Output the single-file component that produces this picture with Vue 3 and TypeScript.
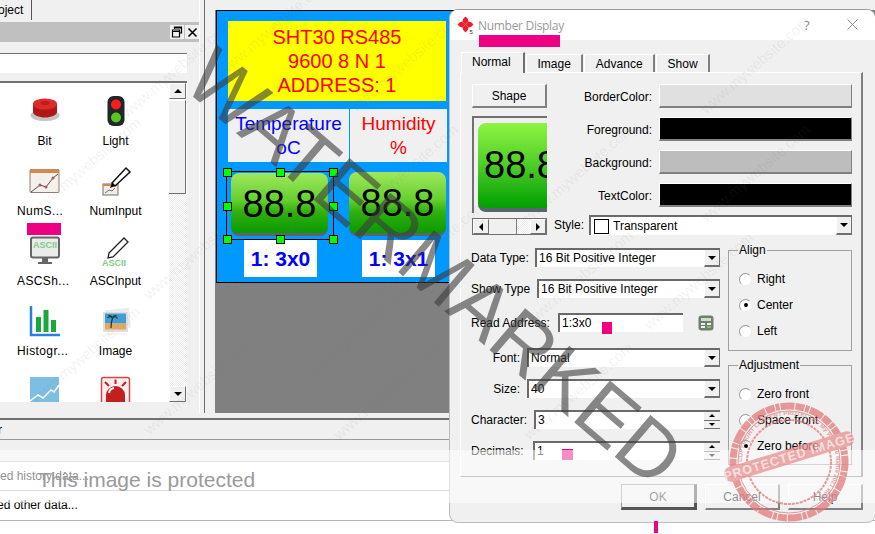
<script setup lang="ts">
import { ref } from 'vue';

const tools = ref([
    { name: 'Bit', icon: 'bit', elided: false },
    { name: 'Light', icon: 'light', elided: false },
    { name: 'NumS...', icon: 'numshow', elided: true },
    { name: 'NumInput', icon: 'numinput', elided: false },
    { name: 'ASCSh...', icon: 'ascshow', elided: true },
    { name: 'ASCInput', icon: 'ascinput', elided: false },
    { name: 'Histogr...', icon: 'histogram', elided: true },
    { name: 'Image', icon: 'image', elided: false },
    { name: 'Curve', icon: 'curve', elided: false },
    { name: 'Alarm', icon: 'alarm', elided: false },
]);

const tabs = ref(['Normal', 'Image', 'Advance', 'Show']);

const colors = ref([
    { label: 'BorderColor:', value: '#e0e0e0' },
    { label: 'Foreground:', value: '#000000' },
    { label: 'Background:', value: '#bdbdbd' },
    { label: 'TextColor:', value: '#000000' },
]);

const fields = ref([
    { label: 'Data Type:', value: '16 Bit Positive Integer', kind: 'combo', width: 64, right: false, top: 0 },
    { label: 'Show Type', value: '16 Bit Positive Integer', kind: 'combo', width: 66, right: false, top: 12 },
    { label: 'Read Address:', value: '1:3x0', kind: 'input', width: 87, right: false, top: 15 },
    { label: 'Font:', value: 'Normal', kind: 'combo', width: 56, right: true, top: 16 },
    { label: 'Size:', value: '40', kind: 'combo', width: 56, right: true, top: 12 },
    { label: 'Character:', value: '3', kind: 'spin', width: 63, right: false, top: 12 },
    { label: 'Decimals:', value: '1', kind: 'spin', width: 62, right: false, top: 12 },
]);

const alignOptions = ref(['Right', 'Center', 'Left']);
const adjustOptions = ref(['Zero front', 'Space front', 'Zero before']);

const handles = ref([
    [0, 0], [50, 0], [100, 0],
    [0, 50], [100, 50],
    [0, 100], [50, 100], [100, 100],
]);

const stamps = ref([
    [28, 205], [27, 394], [118, 108], [140, 290], [215, 66], [215, 284],
    [347, 102], [345, 212], [372, 288], [300, 370], [520, 212], [697, 104],
    [697, 212], [520, 318], [640, 320], [140, 425], [330, 430], [520, 430],
]);

const petals = ref([0, 90, 180, 270]);
</script>

<template>
  <div class="app">
    <div class="workspace">
      <aside class="toolbox">
        <div class="tab-strip">
          <div class="dock-tab">oject</div>
        </div>
        <div class="dock-title">
          <span class="dock-btn">
            <svg width="12" height="12" viewBox="0 0 12 12"><path d="M3.5 3V1h7v6H8.5M1.5 4h7v7h-7zM1.5 5.5h7M3.5 2h7" fill="none" stroke="#000" stroke-width="1.2"/></svg>
          </span>
          <span class="dock-btn">
            <svg width="11" height="11" viewBox="0 0 11 11"><path d="M1.5 1.5l8 8M9.5 1.5l-8 8" stroke="#000" stroke-width="1.6"/></svg>
          </span>
        </div>
        <div class="search"></div>
        <div class="tool-list">
          <div class="tool-grid">
            <div v-for="tool in tools" :key="tool.name" class="tool">
              <svg class="tool-icon" width="32" height="32" viewBox="0 0 32 32">
                <template v-if="tool.icon === 'bit'">
                  <ellipse cx="16" cy="19.500" rx="14.500" ry="5.500" fill="#c4c4c4"/>
                  <path d="M4 8v8c0 3 6 5.500 12 5.500S28 19 28 16V8z" fill="#b01818"/>
                  <ellipse cx="16" cy="8" rx="12" ry="5.500" fill="#e02a2a"/>
                  <ellipse cx="16" cy="7" rx="4.500" ry="2" fill="#bd1c1c"/>
                </template>
                <template v-else-if="tool.icon === 'light'">
                  <rect x="7.500" y="0" width="17" height="30" rx="6" fill="#20262b"/>
                  <circle cx="16" cy="8.500" r="5" fill="#ff1a1a"/>
                  <circle cx="16" cy="21.500" r="5" fill="#55c81e"/>
                </template>
                <template v-else-if="tool.icon === 'numshow'">
                  <rect x="1" y="3.500" width="29" height="23" rx="1" fill="#f4f1ec" stroke="#8c7f78"/>
                  <rect x="1" y="3" width="29" height="4" fill="#cb8c4e"/>
                  <path d="M2 26l9-7 6 2 7-9 5-4" fill="none" stroke="#5c4a4a"/>
                  <circle cx="11" cy="19" r="1.500" fill="#a85a50"/>
                  <circle cx="17" cy="21" r="1.500" fill="#a85a50"/>
                  <circle cx="24" cy="12" r="1.500" fill="#a85a50"/>
                </template>
                <template v-else-if="tool.icon === 'numinput'">
                  <rect x="3" y="18" width="15" height="11" fill="#f0ede8" stroke="#7a6f68"/>
                  <rect x="3" y="18" width="15" height="2" fill="#cb8c4e"/>
                  <path d="M5 27l4-3 3 1 3-3" fill="none" stroke="#5c4a4a" stroke-width=".8"/>
                  <path d="M12 17l14-15 4 4-15 14z" fill="#fff" stroke="#111" stroke-width="1.500"/>
                  <path d="M10 22l2-5 3 3z" fill="#000"/>
                </template>
                <template v-else-if="tool.icon === 'ascshow'">
                  <rect x="2" y="1.500" width="28" height="20" rx="2" fill="#e9ece8" stroke="#666" stroke-width="2"/>
                  <text x="16" y="12" text-anchor="middle" class="icon-text">ASCII</text>
                  <path d="M14 22h4v4h-4zM9 27h14" stroke="#666" stroke-width="2" fill="#666"/>
                </template>
                <template v-else-if="tool.icon === 'ascinput'">
                  <path d="M9 17L24 2l4 4-15 15-5 1z" fill="#fff" stroke="#222" stroke-width="1.300"/>
                  <text x="14" y="30" text-anchor="middle" class="icon-text">ASCII</text>
                </template>
                <template v-else-if="tool.icon === 'histogram'">
                  <path d="M2 0v29h29" fill="none" stroke="#2a7ee0" stroke-width="2.500"/>
                  <rect x="7" y="11" width="5" height="15" fill="#1aa83c"/>
                  <rect x="14.500" y="4" width="5" height="22" fill="#1aa83c"/>
                  <rect x="22" y="14" width="5" height="12" fill="#1aa83c"/>
                </template>
                <template v-else-if="tool.icon === 'image'">
                  <rect x="6" y="3" width="24" height="20" fill="#ececec" transform="rotate(-6 18 13)"/>
                  <rect x="3" y="6" width="25" height="20" fill="#dedede"/>
                  <rect x="5" y="7.500" width="21" height="10" fill="#3f9ed8"/>
                  <rect x="5" y="17.500" width="21" height="6" fill="#e5a760"/>
                  <path d="M11 22c0-4 .5-7 1.500-10" fill="none" stroke="#3a2d1c" stroke-width="1.200"/>
                  <path d="M12.500 12c-2-2-4-1.500-5 0M12.500 12c2-2 4-1.500 5 .5M12.500 12c-1-2-3-3-4-2.500M12.500 12c1-2 3-3 4-2" fill="none" stroke="#1f3d22" stroke-width="1.200"/>
                  <rect x="5" y="27" width="22" height="2" fill="#f4f4f4"/>
                </template>
                <template v-else-if="tool.icon === 'curve'">
                  <rect x="1" y="1" width="29" height="31" fill="#7cbfe2"/>
                  <path d="M1 25l8-6 5 3 8-8 3 2 5-7" fill="none" stroke="#fff" stroke-width="1.500"/>
                </template>
                <template v-else>
                  <rect x="1.500" y="1.500" width="28" height="30" rx="2" fill="#fbeeee" stroke="#d64848" stroke-width="1.500"/>
                  <path d="M6 32V19a9.500 9 0 0 1 19 0v13z" fill="#c41f1f"/>
                  <path d="M9 17a6 6 0 0 1 5-5" fill="none" stroke="#fff" stroke-width="2"/>
                  <path d="M15.500 3.500v4.500M5 6l4 4M26 6l-4 4" stroke="#c41f1f" stroke-width="2"/>
                </template>
              </svg>
              <span class="tool-name" :class="{ elided: tool.elided }">{{ tool.name }}</span>
            </div>
          </div>
          <div class="v-scroll">
            <div class="scroll-btn"><i class="arrow-up"></i></div>
            <div class="scroll-thumb"></div>
            <div class="scroll-track"></div>
            <div class="scroll-btn"><i class="arrow-down"></i></div>
          </div>
        </div>
      </aside>

      <main class="canvas-area">
        <div class="canvas">
          <div class="screen">
            <div class="banner">
              <div>SHT30 RS485</div>
              <div>9600 8 N 1</div>
              <div>ADDRESS: 1</div>
            </div>
            <div class="headers">
              <div class="header-cell temperature">Temperature<br>oC</div>
              <div class="header-cell humidity">Humidity<br>%</div>
            </div>
            <div class="gauges">
              <div class="gauge first">
                <div class="gauge-face">88.8</div>
                <div class="gauge-label">1: 3x0</div>
                <div class="selection">
                  <i
                    v-for="(h, i) in handles"
                    :key="i"
                    class="handle"
                    :style="{ left: h[0] + '%', top: h[1] + '%' }"
                  ></i>
                </div>
              </div>
              <div class="gauge second">
                <div class="gauge-face">88.8</div>
                <div class="gauge-label">1: 3x1</div>
              </div>
            </div>
          </div>
        </div>
      </main>
    </div>

    <section class="log">
      <div class="log-head">r</div>
      <div class="log-spacer"></div>
      <div class="log-row">ed history data...</div>
      <div class="log-row last">ed other data...</div>
    </section>

    <section class="dialog">
      <header class="dialog-title">
        <svg class="dialog-logo" width="18" height="18" viewBox="0 0 18 18">
          <g v-for="a in petals" :key="a" :transform="`rotate(${a} 8.500 8.500)`">
            <path d="M8.500 8.500L5.500 5.500Q5.500 2.500 8.500 .5Q11.500 2.500 11.500 5.500z" fill="#e8202a"/>
          </g>
          <text x="12.500" y="17.500" class="logo-five">5</text>
        </svg>
        <span class="dialog-name">Number Display</span>
        <span class="dialog-help">?</span>
        <svg class="dialog-close" width="11" height="11" viewBox="0 0 11 11"><path d="M.5.5l10 10M10.500.5l-10 10" stroke="#8a8a8a" stroke-width="1"/></svg>
      </header>

      <div class="tabs">
        <div v-for="(tab, i) in tabs" :key="tab" class="tab" :class="{ active: i === 0 }">{{ tab }}</div>
      </div>

      <div class="pane">
        <div class="pane-top">
          <div class="preview-col">
            <div class="btn shape-btn">Shape</div>
            <div class="preview">
              <div class="preview-face">88.8</div>
            </div>
            <div class="h-scroll">
              <div class="scroll-btn small"><i class="arrow-left"></i></div>
              <div class="h-thumb"></div>
              <div class="h-track"></div>
              <div class="scroll-btn small"><i class="arrow-right"></i></div>
            </div>
          </div>
          <div class="color-col">
            <div v-for="c in colors" :key="c.label" class="color-row">
              <label class="color-label">{{ c.label }}</label>
              <div class="color-btn" :style="{ background: c.value }"></div>
            </div>
            <div class="style-row">
              <label class="style-label">Style:</label>
              <div class="combo grow">
                <span class="swatch"></span>
                <span class="combo-text">Transparent</span>
                <div class="combo-btn"><i class="arrow-down"></i></div>
              </div>
            </div>
          </div>
        </div>

        <div class="pane-bottom">
          <div class="form-col">
            <div
              v-for="f in fields"
              :key="f.label"
              class="field"
              :style="{ marginTop: f.top + 'px' }"
            >
              <label
                class="field-label"
                :class="{ right: f.right }"
                :style="{ width: f.width + 'px' }"
              >{{ f.label }}</label>
              <template v-if="f.kind === 'input'">
                <div class="combo address"><span class="combo-text">{{ f.value }}</span></div>
                <svg class="calc" width="16" height="16" viewBox="0 0 16 16">
                  <rect x=".5" y=".5" width="15" height="15" rx="3" fill="#6f7f70"/>
                  <rect x="3" y="3" width="10" height="3" fill="#cfe0c8"/>
                  <rect x="3" y="8" width="4" height="2" fill="#eee"/>
                  <rect x="9" y="8" width="4" height="2" fill="#eee"/>
                  <rect x="3" y="11" width="4" height="2" fill="#eee"/>
                  <rect x="9" y="11" width="4" height="2" fill="#7ac943"/>
                </svg>
              </template>
              <div v-else class="combo grow">
                <span class="combo-text">{{ f.value }}</span>
                <div v-if="f.kind === 'combo'" class="combo-btn"><i class="arrow-down"></i></div>
                <div v-else class="spin">
                  <div class="spin-btn"><i class="arrow-up tiny"></i></div>
                  <div class="spin-btn"><i class="arrow-down tiny"></i></div>
                </div>
              </div>
            </div>
          </div>
          <div class="group-col">
            <div class="group">
              <span class="group-title">Align</span>
              <div v-for="(o, i) in alignOptions" :key="o" class="radio-row">
                <i class="radio" :class="{ checked: i === 1 }"></i>
                <span>{{ o }}</span>
              </div>
            </div>
            <div class="group second-group">
              <span class="group-title">Adjustment</span>
              <div v-for="(o, i) in adjustOptions" :key="o" class="radio-row">
                <i class="radio" :class="{ checked: i === 2 }"></i>
                <span>{{ o }}</span>
              </div>
            </div>
          </div>
        </div>
      </div>

      <footer class="dialog-foot">
        <div class="btn foot-btn default">OK</div>
        <div class="btn foot-btn">Cancel</div>
        <div class="btn foot-btn">Help</div>
      </footer>
    </section>

    <!-- redaction marks -->
    <i class="mark mark-title"></i>
    <i class="mark mark-tool"></i>
    <i class="mark mark-address"></i>
    <i class="mark mark-decimals"></i>
    <i class="mark mark-foot"></i>

    <!-- watermark layers -->
    <div class="veil"></div>
    <span
      v-for="(s, i) in stamps"
      :key="i"
      class="tile"
      :style="{ left: s[0] + 'px', top: s[1] + 'px' }"
    >www.mywebsite.com</span>
    <div class="big-mark">WATERMARKED</div>
    <div class="protected">This image is protected</div>
    <svg class="seal" width="130" height="130" viewBox="0 0 130 130">
      <defs>
        <path id="seal-ring" d="M65 65m-47 0a47 47 0 1 1 94 0a47 47 0 1 1-94 0"/>
      </defs>
      <circle cx="65" cy="65" r="56" fill="none" stroke="#e27a7a" stroke-width="7" stroke-dasharray="9 1 4 1 14 1"/>
      <circle cx="65" cy="65" r="51" fill="none" stroke="#e27a7a" stroke-width="1"/>
      <circle cx="65" cy="65" r="42" fill="none" stroke="#e27a7a" stroke-width="2" stroke-dasharray="3 1"/>
      <text class="seal-ring-text"><textPath href="#seal-ring">COPYRIGHT CONTENT PROTECTED  My Website Name 2021 Best</textPath></text>
      <g transform="rotate(-17 65 59)">
        <rect x="-2" y="52" width="134" height="15" rx="6" fill="#e98f8f"/>
        <text x="65" y="64" text-anchor="middle" class="seal-text">PROTECTED IMAGE</text>
      </g>
    </svg>
  </div>
</template>

<style>
html, body {
  margin: 0;
  background: #fff;
}
</style>

<style scoped>
.app {
  position: relative;
  width: 875px;
  height: 534px;
  overflow: hidden;
  background: #fff;
  font-family: "Liberation Sans", Arial, sans-serif;
  font-size: 12px;
  color: #000;
}

.workspace {
  display: flex;
  height: 418px;
  background: #f0f0f0;
}

.toolbox {
  width: 204px;
  height: 413px;
  border-right: 1px solid #707070;
  box-shadow: inset -4px 0 0 #f0f0f0, inset -5px 0 0 #fff;
}

.tab-strip {
  height: 21px;
}

.dock-tab {
  width: 32px;
  height: 20px;
  line-height: 21px;
  box-sizing: border-box;
  border-right: 1px solid #555;
  text-indent: -2px;
  overflow: hidden;
}

.dock-title {
  width: 199px;
  height: 20px;
  margin-top: 1px;
  background: #c0c0c0;
  display: flex;
  justify-content: flex-end;
  align-items: center;
  gap: 1px;
}

.dock-btn {
  width: 14px;
  height: 14px;
  background: #f0f0f0;
  display: flex;
  align-items: center;
  justify-content: center;
}

.search {
  width: 187px;
  height: 20px;
  margin-top: 11px;
  box-sizing: border-box;
  background: #fff;
  border-top: 1px solid #707070;
}

.tool-list {
  display: flex;
  width: 187px;
  height: 321px;
  margin-top: 8px;
  box-sizing: border-box;
  background: #fff;
  border-top: 2px solid #707070;
  overflow: hidden;
}

.tool-grid {
  flex: 1;
  display: grid;
  grid-template-columns: 71px 71px;
  grid-auto-rows: 70px;
  padding: 13px 0 0 9px;
  box-sizing: border-box;
}

.tool {
  display: flex;
  flex-direction: column;
  align-items: center;
}

.tool-icon {
  flex: none;
}

.tool-name {
  margin-top: 5px;
  line-height: 16px;
  white-space: nowrap;
}

.tool-name.elided {
  align-self: flex-start;
  margin-left: 8px;
  letter-spacing: 0.4px;
}

.icon-text {
  font-family: "Liberation Sans", Arial, sans-serif;
  font-size: 9px;
  font-weight: bold;
  fill: #7fcc8a;
}

.v-scroll {
  width: 18px;
  display: flex;
  flex-direction: column;
}

.scroll-btn {
  width: 17px;
  height: 16px;
  box-sizing: border-box;
  background: #f0f0f0;
  border-top: 1px solid #fff;
  border-left: 1px solid #fff;
  border-right: 1px solid #707070;
  border-bottom: 1px solid #707070;
  display: flex;
  align-items: center;
  justify-content: center;
  flex: none;
}

.scroll-thumb {
  width: 17px;
  height: 94px;
  margin-top: 1px;
  box-sizing: border-box;
  background: #f0f0f0;
  border-right: 1px solid #707070;
  border-bottom: 1px solid #707070;
  border-top: 1px solid #fff;
  flex: none;
}

.scroll-track {
  flex: 1;
  background: repeating-conic-gradient(#fff 0 25%, #ececec 0 50%) 0 0 / 2px 2px;
}

.arrow-up, .arrow-down, .arrow-left, .arrow-right {
  display: block;
  width: 0;
  height: 0;
  border-style: solid;
  border-color: transparent;
}

.arrow-up {
  border-width: 0 4px 4px;
  border-bottom-color: #000;
}

.arrow-down {
  border-width: 4px 4px 0;
  border-top-color: #000;
}

.arrow-left {
  border-width: 4px 4px 4px 0;
  border-right-color: #000;
}

.arrow-right {
  border-width: 4px 0 4px 4px;
  border-left-color: #000;
}

.arrow-up.tiny {
  border-width: 0 3px 3px;
}

.arrow-down.tiny {
  border-width: 3px 3px 0;
}

.canvas-area {
  flex: 1;
  padding: 10px 0 0 10px;
  min-width: 0;
}

.canvas {
  height: 403px;
  background: #808080;
  overflow: hidden;
}

.screen {
  width: 246px;
  height: 273px;
  margin-left: 1px;
  box-sizing: border-box;
  background: #0099ff;
  border: 1px solid #000;
  border-width: 1px 0 1px 1px;
  padding: 10px 0 0 11px;
}

.banner {
  width: 218px;
  height: 80px;
  background: #ffff00;
  color: #ff0000;
  font-size: 20px;
  line-height: 24px;
  text-align: center;
  padding-top: 4px;
  box-sizing: border-box;
}

.headers {
  display: flex;
  gap: 1px;
  margin-top: 8px;
}

.header-cell {
  height: 53px;
  background: #f0f0f0;
  font-size: 19px;
  line-height: 24px;
  text-align: center;
  padding-top: 3px;
  box-sizing: border-box;
}

.temperature {
  width: 121px;
  color: #0000ff;
}

.humidity {
  width: 97px;
  color: #ff0000;
}

.gauges {
  display: flex;
  margin-top: 10px;
}

.gauge {
  position: relative;
  width: 97px;
}

.gauge.first {
  margin: 1px 0 0 3px;
}

.gauge.second {
  margin-left: 21px;
}

.gauge-face {
  height: 63px;
  box-sizing: border-box;
  border-radius: 8px;
  border-bottom: 3px solid #55666c;
  background: linear-gradient(#9ee85c 0%, #66d030 45%, #30b010 65%, #0a9a00 100%);
  font-size: 38px;
  line-height: 62px;
  text-align: center;
}

.second .gauge-face {
  height: 64px;
}

.gauge-label {
  width: 73px;
  height: 37px;
  margin: 4px 0 0 13px;
  background: #fff;
  color: #0000ff;
  font-size: 21px;
  font-weight: bold;
  line-height: 37px;
  text-align: center;
}

.selection {
  position: absolute;
  left: -5px;
  top: -2px;
  width: 108px;
  height: 69px;
  box-sizing: border-box;
  border: 1px solid #000;
}

.handle {
  position: absolute;
  width: 7px;
  height: 7px;
  margin: -4px 0 0 -4px;
  background: #00ff00;
  border: 1px solid #000;
}

.log {
  background: #fff;
  height: 116px;
}

.log-head {
  height: 19px;
  line-height: 21px;
  background: #f0f0f0;
  border-top: 2px solid #707070;
  border-bottom: 1px solid #999;
  text-indent: -2px;
}

.log-spacer {
  height: 21px;
  background: #f0f0f0;
  border-bottom: 1px solid #c0c0c0;
}

.log-row {
  height: 28px;
  line-height: 29px;
  border-bottom: 1px solid #b4b4b4;
}

.log-row.last {
  height: 29px;
  text-indent: -3px;
}

.dialog {
  position: absolute;
  left: 450px;
  top: 10px;
  width: 425px;
  height: 512px;
  box-sizing: border-box;
  background: #f0f0f0;
  border-radius: 8px;
  box-shadow: 0 -1px 0 #999, -1px 0 0 #bbb, 0 1px 0 #bbb;
  overflow: hidden;
  display: flex;
  flex-direction: column;
}

.dialog-title {
  height: 30px;
  flex: none;
  background: #fff;
  display: flex;
  align-items: center;
  padding-left: 7px;
  position: relative;
}

.logo-five {
  font-family: "Liberation Sans", Arial, sans-serif;
  font-size: 6px;
  fill: #333;
}

.dialog-name {
  margin-left: 3px;
  font-family: "Open Sans", sans-serif;
  font-size: 12px;
  letter-spacing: -0.3px;
  color: #999;
}

.dialog-help {
  position: absolute;
  left: 354px;
  top: 6px;
  font-family: "Open Sans", sans-serif;
  font-size: 13px;
  color: #888;
}

.dialog-close {
  position: absolute;
  left: 397px;
  top: 9px;
}

.tabs {
  display: flex;
  align-items: flex-end;
  height: 20px;
  margin: 12px 0 0 11px;
  flex: none;
}

.tab {
  height: 18px;
  line-height: 18px;
  padding: 0 10.500px;
  margin-right: 1px;
  box-sizing: border-box;
  background: #f0f0f0;
  border-top: 1px solid #fff;
  border-left: 1px solid #fff;
  border-right: 2px solid #808080;
}

.tab.active {
  width: 64px;
  height: 21px;
  line-height: 19px;
  padding: 0 0 0 10px;
  position: relative;
  margin-bottom: -1px;
  z-index: 1;
  border-right-color: #707070;
}

.pane {
  width: 403px;
  height: 405px;
  margin-left: 10px;
  flex: none;
  box-sizing: border-box;
  border-top: 1px solid #fff;
  border-left: 1px solid #fff;
  border-right: 2px solid #808080;
  border-bottom: 1px solid #808080;
  padding: 11px 9px 0 11px;
}

.pane-top {
  display: flex;
  height: 151px;
}

.preview-col {
  width: 75px;
}

.btn {
  box-sizing: border-box;
  background: #f0f0f0;
  border-top: 1px solid #fff;
  border-left: 1px solid #fff;
  border-right: 2px solid #808080;
  border-bottom: 2px solid #808080;
  text-align: center;
}

.shape-btn {
  height: 24px;
  line-height: 23px;
}

.preview {
  height: 97px;
  margin-top: 8px;
  box-sizing: border-box;
  border: 2px solid #707070;
  border-right: 0;
  border-bottom: 0;
  background: #f0f0f0;
  padding: 5px 0 0 4px;
  overflow: hidden;
}

.preview-face {
  width: 120px;
  height: 89px;
  box-sizing: border-box;
  border-radius: 8px;
  border-bottom: 4px solid #55666c;
  background: linear-gradient(#8ef540 0%, #55d02c 45%, #00a000 100%);
  font-size: 38px;
  line-height: 84px;
  padding-left: 6px;
}

.h-scroll {
  display: flex;
  height: 17px;
  margin-top: 5px;
  border: 1px solid #707070;
  box-sizing: border-box;
}

.scroll-btn.small {
  width: 16px;
  height: 15px;
}

.h-thumb {
  width: 28px;
  background: #f0f0f0;
  border-right: 1px solid #808080;
  box-sizing: border-box;
}

.h-track {
  flex: 1;
  background: repeating-conic-gradient(#fff 0 25%, #ececec 0 50%) 0 0 / 2px 2px;
}

.color-col {
  flex: 1;
  display: flex;
  flex-direction: column;
  gap: 9px;
}

.color-row {
  display: flex;
  align-items: center;
  height: 24px;
}

.color-label {
  width: 105px;
  padding-top: 2px;
  text-align: right;
  margin-right: 7px;
}

.color-btn {
  flex: 1;
  height: 24px;
  box-sizing: border-box;
  border-top: 1px solid #fff;
  border-left: 1px solid #fff;
  border-right: 1px solid #808080;
  border-bottom: 2px solid #808080;
}

.style-row {
  display: flex;
  align-items: center;
  height: 20px;
  margin-top: -1px;
  padding-left: 7px;
}

.style-label {
  width: 29px;
  margin-right: 6px;
}

.combo {
  height: 19px;
  box-sizing: border-box;
  background: #fff;
  border-top: 2px solid #6a6a6a;
  border-left: 2px solid #6a6a6a;
  display: flex;
  align-items: center;
  min-width: 0;
}

.grow {
  flex: 1;
}

.style-row .combo {
  height: 20px;
}

.swatch {
  width: 15px;
  height: 15px;
  margin-left: 3px;
  box-sizing: border-box;
  border: 1px solid #000;
  background: #fff;
}

.combo-text {
  flex: 1;
  padding: 0 0 2px 2px;
  white-space: nowrap;
}

.style-row .combo-text {
  padding: 0 0 0 4px;
}

.combo-btn {
  width: 16px;
  height: 100%;
  box-sizing: border-box;
  background: #f0f0f0;
  border-right: 1px solid #707070;
  border-bottom: 2px solid #707070;
  border-left: 1px solid #fff;
  display: flex;
  align-items: center;
  justify-content: center;
}

.spin {
  width: 16px;
  height: 100%;
  display: flex;
  flex-direction: column;
}

.spin-btn {
  flex: 1;
  background: #f0f0f0;
  border-bottom: 1px solid #707070;
  display: flex;
  align-items: center;
  justify-content: center;
}

.pane-bottom {
  display: flex;
  margin-top: 13px;
  margin-left: -1px;
}

.form-col {
  width: 249px;
}

.field {
  display: flex;
  align-items: center;
  height: 19px;
}

.field-label {
  flex: none;
  white-space: nowrap;
}

.field-label.right {
  text-align: right;
  padding-right: 7px;
  box-sizing: border-box;
}

.address {
  width: 125px;
}

.calc {
  margin-left: 15px;
}

.group-col {
  width: 124px;
  margin-left: 8px;
  padding-top: 2px;
}

.group {
  position: relative;
  height: 101px;
  box-sizing: border-box;
  border: 1px solid #a0a0a0;
  padding-top: 15px;
}

.second-group {
  height: 100px;
  margin-top: 14px;
}

.group-title {
  position: absolute;
  left: 9px;
  top: -8px;
  padding: 0 1px;
  background: #f0f0f0;
}

.radio-row {
  display: flex;
  align-items: center;
  height: 26px;
  padding-left: 10px;
  gap: 5px;
}

.radio {
  width: 11px;
  height: 11px;
  border-radius: 50%;
  background: #fff;
  border: 1px solid #9a9a9a;
  border-right-color: #eee;
  border-bottom-color: #eee;
  position: relative;
}

.radio.checked::after {
  content: "";
  position: absolute;
  left: 3.500px;
  top: 3.500px;
  width: 4px;
  height: 4px;
  border-radius: 50%;
  background: #000;
}

.dialog-foot {
  display: flex;
  justify-content: flex-end;
  gap: 8px;
  margin-top: 7px;
  padding-right: 12px;
}

.foot-btn {
  width: 75px;
  height: 26px;
  line-height: 24px;
  color: #000;
}

.foot-btn.default {
  width: 76px;
  border-right: 3px solid #555;
  border-bottom: 3px solid #555;
  border-top: 1px solid #999;
  border-left: 1px solid #999;
  color: #333;
}

.mark {
  position: absolute;
  background: #ee0083;
}

.mark-title {
  left: 479px;
  top: 35px;
  width: 81px;
  height: 12px;
}

.mark-tool {
  left: 27px;
  top: 223px;
  width: 34px;
  height: 12px;
}

.mark-address {
  left: 602px;
  top: 322px;
  width: 10px;
  height: 12px;
}

.mark-decimals {
  left: 562px;
  top: 449px;
  width: 11px;
  height: 11px;
}

.mark-foot {
  left: 654px;
  top: 521px;
  width: 4px;
  height: 12px;
}

.veil {
  position: absolute;
  left: 0;
  top: 450px;
  width: 875px;
  height: 53px;
  background: rgba(255, 255, 255, 0.55);
  pointer-events: none;
}

.tile {
  position: absolute;
  font-family: "Liberation Sans", Arial, sans-serif;
  font-size: 15px;
  color: rgba(120, 120, 120, 0.1);
  white-space: nowrap;
  transform-origin: left top;
  transform: rotate(-41deg);
  pointer-events: none;
}

.big-mark {
  position: absolute;
  left: 224px;
  top: 35px;
  font-family: "Liberation Sans", Arial, sans-serif;
  font-size: 80px;
  line-height: 1;
  color: rgba(60, 60, 60, 0.6);
  white-space: nowrap;
  transform-origin: left top;
  transform: rotate(40.500deg);
  pointer-events: none;
}

.protected {
  position: absolute;
  left: 38px;
  top: 467px;
  font-family: "Liberation Sans", Arial, sans-serif;
  font-size: 21px;
  line-height: 26px;
  color: #9a9a9a;
  white-space: nowrap;
}

.seal {
  position: absolute;
  left: 724px;
  top: 397px;
  opacity: 0.75;
  pointer-events: none;
}

.seal-text {
  font-family: "Liberation Sans", Arial, sans-serif;
  font-size: 12.500px;
  font-weight: bold;
  letter-spacing: 1px;
  fill: #f8d8d8;
}

.seal-ring-text {
  font-family: "Liberation Sans", Arial, sans-serif;
  font-size: 6px;
  font-weight: bold;
  fill: #e08a8a;
}
</style>
